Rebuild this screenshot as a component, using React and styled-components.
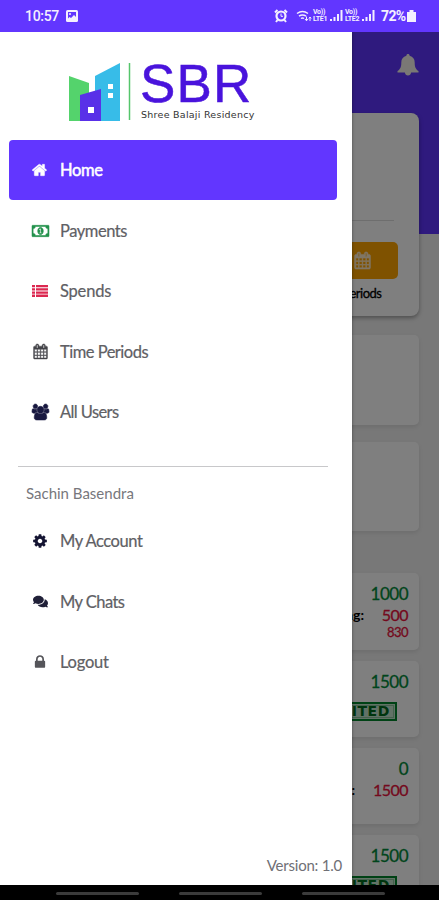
import React from "react";
import styled, { createGlobalStyle } from "styled-components";
import { FaComments } from "react-icons/fa";

const GlobalStyle = createGlobalStyle`
  * {
    box-sizing: border-box;
  }
  body {
    margin: 0;
    font-family: Lato, "Open Sans", sans-serif;
  }
`;

const Screen = styled.div`
  display: flex;
  flex-direction: column;
  width: 439px;
  height: 900px;
  overflow: hidden;
  background: #000;
`;

const StatusBar = styled.header`
  display: flex;
  flex: 0 0 32px;
  align-items: center;
  padding: 0 23px 0 25px;
  color: #f4efff;
  background: #6236ff;
`;

const Clock = styled.span`
  width: 35px;
  margin-right: 5px;
  font: 500 14px/32px Roboto, sans-serif;
  letter-spacing: -0.3px;
`;

const StatusIcons = styled.div`
  display: flex;
  align-items: center;
  margin-left: auto;
`;

const Volte = styled.span`
  width: 17px;
  font: 700 7px/7px Roboto, sans-serif;
  letter-spacing: -0.3px;
  margin-left: ${({ gap }) => gap || 0}px;
`;

const Battery = styled.span`
  width: 26px;
  margin-left: 6px;
  font: 700 14px/32px Roboto, sans-serif;
  letter-spacing: -0.6px;
`;

const Body = styled.div`
  position: relative;
  flex: 0 0 853px;
  overflow: hidden;
`;

const Page = styled.main`
  height: 853px;
  overflow: hidden;
  background: #f0f0f0;
`;

const Hero = styled.div`
  display: flex;
  height: 202px;
  margin-bottom: -121px;
  padding: 22px 20px 0 0;
  align-items: flex-start;
  justify-content: flex-end;
  color: #f4f0ea;
  background: #5e34fc;
`;

const Card = styled.section`
  height: ${({ height }) => height}px;
  margin: 0 20px ${({ gap }) => gap}px 14px;
  border-radius: ${({ radius }) => radius || 5}px;
  background: #fff;
  box-shadow: 0 2px 4px rgba(0, 0, 0, ${({ shade }) => shade || 0.09});
`;

const SummaryCard = styled(Card)`
  display: flex;
  flex-direction: column;
  align-items: flex-end;
  padding: 107px 21px 0;
`;

const Rule = styled.div`
  width: 100%;
  height: 1px;
  margin-right: 4px;
  background: #ddd;
`;

const PeriodTile = styled.div`
  display: flex;
  flex-direction: column;
  align-items: center;
  width: 72px;
  margin-top: 21px;
  font-size: 13px;
  line-height: 28px;
  letter-spacing: -0.5px;
  color: #000;
  -webkit-text-stroke: 0.3px #000;
`;

const PeriodButton = styled.div`
  display: flex;
  align-items: center;
  justify-content: center;
  width: 72px;
  height: 37px;
  border-radius: 5px;
  color: #ffeccb;
  background: #ffa400;
`;

const EntryCard = styled(Card)`
  padding: 10px 11px;
`;

const Line = styled.div`
  display: flex;
  justify-content: flex-end;
  align-items: center;
  height: ${({ height }) => height || 21}px;
`;

const Label = styled.span`
  margin-right: auto;
  padding-left: ${({ indent }) => indent}px;
  font-size: 14px;
  font-weight: 700;
  line-height: 17px;
  color: #000;
`;

const Amount = styled.span`
  font-size: ${({ size }) => size || 17}px;
  letter-spacing: -0.5px;
  color: ${({ due }) => (due ? "#e8123c" : "#008a38")};
  -webkit-text-stroke: 0.3px;
`;

const Stamp = styled.div`
  display: flex;
  width: 92px;
  height: 19px;
  margin: 10px 11px 0 auto;
  padding-right: 5px;
  align-items: center;
  justify-content: flex-end;
  border: 2px solid #00852b;
  outline: 1px solid #8bc59b;
  outline-offset: -4px;
  font: 700 14px/15px "DejaVu Sans", sans-serif;
  letter-spacing: 0.6px;
  color: #006a1c;
  background: #c5e5cc;
`;

const Scrim = styled.div`
  position: absolute;
  inset: 0;
  background: rgba(0, 0, 0, 0.5);
`;

const Drawer = styled.aside`
  position: absolute;
  top: 0;
  left: 0;
  bottom: 0;
  display: flex;
  flex-direction: column;
  width: 352px;
  padding: 30px 15px 0 9px;
  background: #fff;
  box-shadow: 0 0 3px rgba(0, 0, 0, 0.4);
`;

const Brand = styled.div`
  display: flex;
  flex: 0 0 78px;
  padding-left: 59px;
`;

const BrandText = styled.div`
  padding-left: 8px;
  white-space: nowrap;
`;

const BrandName = styled.div`
  height: 47px;
  font: 53px/43px "Liberation Sans", Arial, sans-serif;
  letter-spacing: 1.2px;
  color: #4913dc;
  -webkit-text-stroke: 0.5px #4913dc;
`;

const BrandSub = styled.div`
  padding-left: 1px;
  font: 9.5px/12px "DejaVu Sans", sans-serif;
  letter-spacing: 0.26px;
  color: #333;
`;

const MenuItem = styled.a`
  display: flex;
  flex: 0 0 60px;
  align-items: center;
  width: 328px;
  margin-bottom: 0.6px;
  padding-left: 22px;
  border-radius: 4px;
  font-size: 16.5px;
  color: ${({ active }) => (active ? "#fff" : "#606064")};
  -webkit-text-stroke: ${({ active }) => (active ? "0.5px #fff" : "0.2px #606064")};
  background: ${({ active }) => (active ? "#6236ff" : "transparent")};
`;

const MenuIcon = styled.span`
  display: flex;
  justify-content: center;
  width: 18px;
  margin-right: 11px;
  color: ${({ tint }) => tint};
`;

const MenuText = styled.span`
  letter-spacing: ${({ spacing }) => spacing}px;
`;

const Divider = styled.hr`
  flex: 0 0 1px;
  width: 310px;
  margin: 23px 0 16px 9px;
  border: 0;
  background: #c8c8ca;
`;

const UserName = styled.div`
  height: 28px;
  padding-left: 17px;
  font-size: 15px;
  line-height: 21px;
  letter-spacing: 0;
  color: #77777c;
`;

const Version = styled.div`
  margin: auto -5px 10px 0;
  text-align: right;
  font-size: 15px;
  line-height: 20px;
  letter-spacing: -0.22px;
  color: #707076;
`;

const NavBar = styled.footer`
  display: flex;
  flex: 1;
  gap: 40px;
  padding: 7px 0 0 56px;
`;

const NavHandle = styled.span`
  width: 83px;
  height: 3px;
  border-radius: 2px;
  background: #3b3b3b;
`;

const glyphs = {
  home: {
    box: "0 0 1792 1792",
    d: "M1408 992v480q0 26-19 45t-45 19h-384v-384h-256v384h-384q-26 0-45-19t-19-45v-480q0-1 .5-3t.5-3l575-474 575 474q1 2 1 6zm223-69l-62 74q-8 9-21 11h-3q-13 0-21-7l-692-577-692 577q-12 8-24 7-13-2-21-11l-62-74q-8-10-7-23.5t11-21.5l719-599q32-26 76-26t76 26l244 204v-195q0-14 9-23t23-9h192q14 0 23 9t9 23v408l219 182q10 8 11 21.5t-7 23.5z",
  },
  money: {
    box: "0 0 1920 1792",
    d: "M768 1152h384v-96h-128v-448h-114l-148 137 77 80q42-37 55-57h2v288h-128v96zm512-256q0 70-21 142t-59.5 134-101.5 101-138 39-138-39-101.5-101-59.5-134-21-142 21-142 59.5-134 101.5-101 138-39 138 39 101.5 101 59.5 134 21 142zm512 256v-512q-106 0-181-75t-75-181h-1152q0 106-75 181t-181 75v512q106 0 181 75t75 181h1152q0-106 75-181t181-75zm128-832v1152q0 26-19 45t-45 19h-1792q-26 0-45-19t-19-45v-1152q0-26 19-45t45-19h1792q26 0 45 19t19 45z",
  },
  list: {
    box: "0 0 16 16",
    d: "M0 2h3v2.3H0zM4 2h12v2.3H4zM0 5.2h3v2.3H0zM4 5.2h12v2.3H4zM0 8.4h3v2.3H0zM4 8.4h12v2.3H4zM0 11.6h3v2.4H0zM4 11.6h12v2.4H4z",
  },
  calendar: {
    box: "0 0 1792 1792",
    d: "M192 1664h288v-288h-288v288zm352 0h320v-288h-320v288zm-352-352h288v-320h-288v320zm352 0h320v-320h-320v320zm-352-384h288v-288h-288v288zm736 736h320v-288h-320v288zm-384-736h320v-288h-320v288zm768 736h288v-288h-288v288zm-384-352h320v-320h-320v320zm-352-864v-288q0-13-9.5-22.5t-22.5-9.5h-64q-13 0-22.5 9.5t-9.5 22.5v288q0 13 9.5 22.5t22.5 9.5h64q13 0 22.5-9.5t9.5-22.5zm736 864h288v-320h-288v320zm-384-384h320v-288h-320v288zm384 0h288v-288h-288v288zm32-480v-288q0-13-9.5-22.5t-22.5-9.5h-64q-13 0-22.5 9.5t-9.5 22.5v288q0 13 9.5 22.5t22.5 9.5h64q13 0 22.5-9.5t9.5-22.5zm384-64v1280q0 52-38 90t-90 38h-1408q-52 0-90-38t-38-90v-1280q0-52 38-90t90-38h128v-96q0-66 47-113t113-47h64q66 0 113 47t47 113v96h384v-96q0-66 47-113t113-47h64q66 0 113 47t47 113v96h128q52 0 90 38t38 90z",
  },
  users: {
    box: "0 0 1920 1792",
    d: "M593 896q-162 5-265 128h-134q-82 0-138-40.5t-56-118.5q0-353 124-353 6 0 43.5 21t97.5 42.5 119 21.5q67 0 133-23-5 37-5 66 0 139 81 256zm1071 637q0 120-73 189.5t-194 69.5h-874q-121 0-194-69.5t-73-189.5q0-53 3.5-103.5t14-109 26.5-108.5 43-97.5 62-81 85.5-53.5 111.5-20q10 0 43 21.5t73 48 107 48 135 21.5 135-21.5 107-48 73-48 43-21.5q61 0 111.5 20t85.5 53.5 62 81 43 97.5 26.5 108.5 14 109 3.5 103.5zm-1024-1277q0 106-75 181t-181 75-181-75-75-181 75-181 181-75 181 75 75 181zm704 384q0 159-112.5 271.5t-271.5 112.5-271.5-112.5-112.5-271.5 112.5-271.5 271.5-112.5 271.5 112.5 112.5 271.5zm576 225q0 78-56 118.5t-138 40.5h-134q-103-123-265-128 81-117 81-256 0-29-5-66 66 23 133 23 59 0 119-21.5t97.5-42.5 43.5-21q124 0 124 353zm-128-609q0 106-75 181t-181 75-181-75-75-181 75-181 181-75 181 75 75 181z",
  },
  cog: {
    box: "0 0 1792 1792",
    d: "M1152 896q0-106-75-181t-181-75-181 75-75 181 75 181 181 75 181-75 75-181zm512-109v222q0 12-8 23t-20 13l-185 28q-19 54-39 91 35 50 107 138 10 12 10 25t-9 23q-27 37-99 108t-94 71q-12 0-26-9l-138-108q-44 23-91 38-16 136-29 186-7 28-36 28h-222q-14 0-24.5-8.5t-11.5-21.5l-28-184q-49-16-90-37l-141 107q-10 9-25 9-14 0-25-11-126-114-165-168-7-10-7-23 0-12 8-23 15-21 51-66.5t54-70.5q-27-50-41-99l-183-27q-13-2-21-12.5t-8-23.5v-222q0-12 8-23t19-13l186-28q14-46 39-92-40-57-107-138-10-12-10-24 0-10 9-23 26-36 98.5-107.5t94.5-71.5q13 0 26 10l138 107q44-23 91-38 16-136 29-186 7-28 36-28h222q14 0 24.5 8.5t11.5 21.5l28 184q49 16 90 37l142-107q9-9 24-9 13 0 25 10 129 119 165 170 7 8 7 22 0 12-8 23-15 21-51 66.5t-54 70.5q26 50 41 98l183 28q13 2 21 12.5t8 23.5z",
  },
  lock: {
    box: "0 0 1792 1792",
    d: "M640 768h512v-192q0-106-75-181t-181-75-181 75-75 181v192zm832 96v576q0 40-28 68t-68 28h-960q-40 0-68-28t-28-68v-576q0-40 28-68t68-28h32v-192q0-184 132-316t316-132 316 132 132 316v192h32q40 0 68 28t28 68z",
  },
  bell: {
    box: "0 0 22 22",
    d: "M11 0c1 0 1.6.7 1.6 1.7C16 2.500 17.700 5 17.700 8.500c0 5 1.300 6.700 3.800 8.600v1.400H.5v-1.400C3 15.200 4.300 13.500 4.300 8.500c0-3.500 1.700-6 5.100-6.800C9.400.7 10 0 11 0zM7.700 18h6.600c-.4 2.400-1.600 3.600-3.300 3.600s-2.900-1.200-3.300-3.600z",
  },
};

const Glyph = ({ name, width = 16, height = 16, weight = 0 }) => (
  <svg
    width={width}
    height={height}
    viewBox={glyphs[name].box}
    fill="currentColor"
    stroke="currentColor"
    strokeWidth={weight}
    overflow="visible"
  >
    <path d={glyphs[name].d} />
  </svg>
);

const Logo = () => (
  <svg width="64" height="60" viewBox="0 0 64 60">
    <path d="M1 14l20 7v38H1z" fill="#54d36c" />
    <path d="M27 14L52 1v58H27z" fill="#37bce8" />
    <path d="M12 33l21-6v32H12z" fill="#5930e8" />
    <path d="M20 45h6v6h-6zM40 22h5v5h-5zM40 31h5v5h-5z" fill="#fff" />
    <path d="M61.500 1v57" stroke="#55c56b" strokeWidth="1.500" />
  </svg>
);

const PhotoIcon = () => (
  <svg width="14" height="14" viewBox="0 0 14 14">
    <rect x="1" y="1" width="12" height="12" rx="1.500" fill="#f4efff" />
    <path d="M3 3h8v5L9 6 6 9 4.500 8 3 9.500z" fill="#6236ff" />
    <circle cx="5" cy="5" r="1" fill="#f4efff" />
  </svg>
);

const AlarmIcon = () => (
  <svg width="14" height="14" viewBox="0 0 14 14" fill="none" stroke="currentColor">
    <circle cx="7" cy="7" r="4.500" strokeWidth="2.200" />
    <path d="M1 3.500L3.500 1M13 3.500L10.500 1M3.500 11L2 13M10.500 11l1.500 2" strokeWidth="2" />
    <path d="M7 4.500V7.300h2" strokeWidth="1" />
  </svg>
);

const WifiIcon = () => (
  <svg width="17" height="14" viewBox="0 0 17 14" fill="none" stroke="currentColor">
    <path d="M1 4.500q5.500-4 11 0M3 7.200q3.500-2.500 7 0M5 9.500q1.500-1 3 0" strokeWidth="1.500" />
    <path d="M10.500 7.500v4M9 10l1.500 1.800L12 10M14 12V8M12.800 9.500L14 8l1.200 1.500" />
  </svg>
);

const SignalIcon = () => (
  <svg width="13" height="12" viewBox="0 0 13 12" fill="currentColor">
    <path d="M0 9h2v2H0zM3.500 7h2v4h-2zM7 4h2v7H7zM10.500 0h2v11h-2z" />
  </svg>
);

const BatteryIcon = () => (
  <svg width="9" height="12" viewBox="0 0 9 12" fill="currentColor">
    <path d="M2.500 0h4v2H9v10H0V2h2.500z" />
  </svg>
);

const mainMenu = [
  { text: "Home", icon: <Glyph name="home" weight={50} />, tint: "#fff", active: true },
  { text: "Payments", icon: <Glyph name="money" width={17} weight={60} />, tint: "#22914b", spacing: -0.45 },
  { text: "Spends", icon: <Glyph name="list" />, tint: "#dc2850", spacing: -0.2 },
  {
    text: "Time Periods",
    icon: <Glyph name="calendar" width={15} height={15} weight={50} />,
    tint: "#444449",
    spacing: -0.5,
  },
  { text: "All Users", icon: <Glyph name="users" width={17} weight={70} />, tint: "#17173f", spacing: -0.6 },
];

const accountMenu = [
  { text: "My Account", icon: <Glyph name="cog" />, tint: "#141432", spacing: -0.45 },
  { text: "My Chats", icon: <FaComments size={15} />, tint: "#202038", spacing: -0.55 },
  { text: "Logout", icon: <Glyph name="lock" />, tint: "#55555a", spacing: -0.25 },
];

const Menu = ({ items }) =>
  items.map(({ text, icon, tint, active, spacing = -0.3 }) => (
    <MenuItem key={text} active={active ? 1 : undefined}>
      <MenuIcon tint={tint}>{icon}</MenuIcon>
      <MenuText spacing={spacing}>{text}</MenuText>
    </MenuItem>
  ));

export default function App() {
  return (
    <Screen>
      <GlobalStyle />
      <StatusBar>
        <Clock>10:57</Clock>
        <PhotoIcon />
        <StatusIcons>
          <AlarmIcon />
          <span>&nbsp;&nbsp;</span>
          <WifiIcon />
          <Volte>
            Vo))
            <br />
            LTE1
          </Volte>
          <SignalIcon />
          <Volte gap={2}>
            Vo))
            <br />
            LTE2
          </Volte>
          <SignalIcon />
          <Battery>72%</Battery>
          <BatteryIcon />
        </StatusIcons>
      </StatusBar>
      <Body>
        <Page>
          <Hero>
            <Glyph name="bell" width={22} height={22} />
          </Hero>
          <SummaryCard height={203} gap={19} radius={8} shade={0.35}>
            <Rule />
            <PeriodTile>
              <PeriodButton>
                <Glyph name="calendar" width={17} height={17} weight={60} />
              </PeriodButton>
              Periods
            </PeriodTile>
          </SummaryCard>
          <Card height={90} gap={17} />
          <Card height={89} gap={42} />
          <EntryCard height={77} gap={11}>
            <Line>
              <Amount>1000</Amount>
            </Line>
            <Line>
              <Label indent={285}>Pending:</Label>
              <Amount due size={16}>500</Amount>
            </Line>
            <Line height={14}>
              <Amount due size={13}>830</Amount>
            </Line>
          </EntryCard>
          <EntryCard height={76} gap={11}>
            <Line>
              <Amount>1500</Amount>
            </Line>
            <Stamp>DEPOSITED</Stamp>
          </EntryCard>
          <EntryCard height={76} gap={11}>
            <Line>
              <Amount>0</Amount>
            </Line>
            <Line>
              <Label indent={276}>Pending:</Label>
              <Amount due size={16}>1500</Amount>
            </Line>
          </EntryCard>
          <EntryCard height={76} gap={0}>
            <Line>
              <Amount>1500</Amount>
            </Line>
            <Stamp>DEPOSITED</Stamp>
          </EntryCard>
        </Page>
        <Scrim />
        <Drawer>
          <Brand>
            <Logo />
            <BrandText>
              <BrandName>SBR</BrandName>
              <BrandSub>Shree Balaji Residency</BrandSub>
            </BrandText>
          </Brand>
          <Menu items={mainMenu} />
          <Divider />
          <UserName>Sachin Basendra</UserName>
          <Menu items={accountMenu} />
          <Version>Version: 1.0</Version>
        </Drawer>
      </Body>
      <NavBar>
        <NavHandle />
        <NavHandle />
        <NavHandle />
      </NavBar>
    </Screen>
  );
}
